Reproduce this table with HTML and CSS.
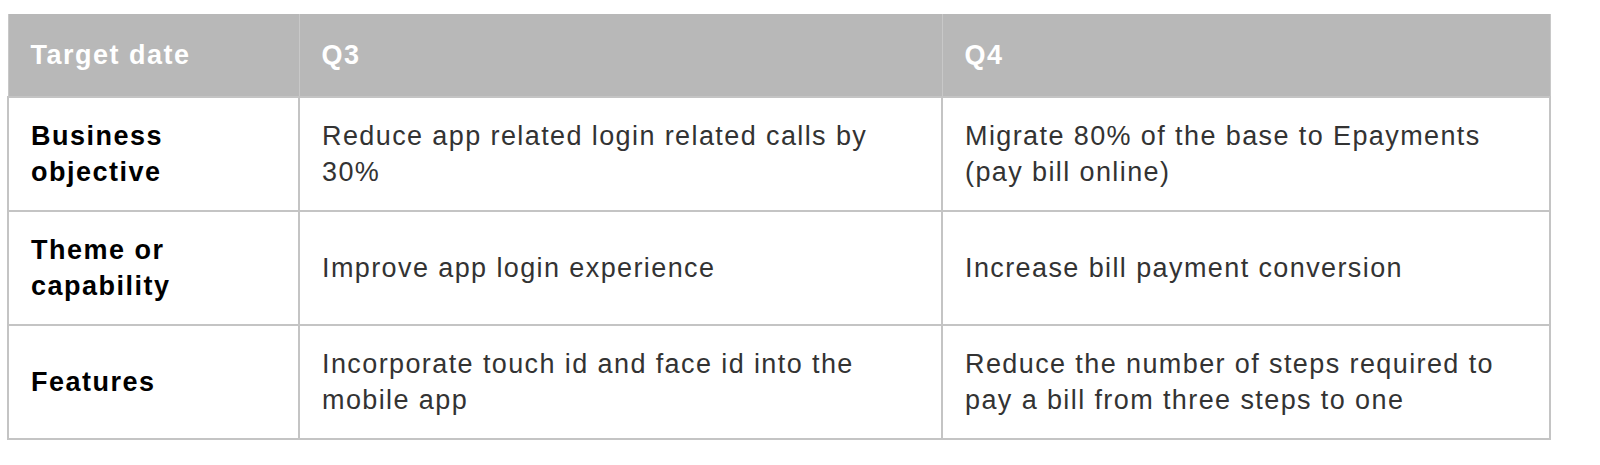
FILE: index.html
```html
<!DOCTYPE html>
<html>
<head>
<meta charset="utf-8">
<link rel="stylesheet" href="styles.css">
</head>
<body>
<table class="roadmap">
  <colgroup>
    <col class="c1"><col class="c2"><col class="c3">
  </colgroup>
  <thead>
    <tr><th>Target date</th><th>Q3</th><th>Q4</th></tr>
  </thead>
  <tbody>
    <tr>
      <td class="label">Business<br>objective</td>
      <td>Reduce app related login related calls by<br>30%</td>
      <td>Migrate 80% of the base to Epayments<br>(pay bill online)</td>
    </tr>
    <tr>
      <td class="label">Theme or<br>capability</td>
      <td>Improve app login experience</td>
      <td>Increase bill payment conversion</td>
    </tr>
    <tr>
      <td class="label">Features</td>
      <td>Incorporate touch id and face id into the<br>mobile app</td>
      <td>Reduce the number of steps required to<br>pay a bill from three steps to one</td>
    </tr>
  </tbody>
</table>
</body>
</html>
```
FILE: styles.css
```css
html, body {
  margin: 0;
  padding: 0;
  background: #ffffff;
}
body {
  padding: 14px 0 0 7px;
  font-family: "Liberation Sans", Arial, Helvetica, sans-serif;
}
.roadmap {
  border-collapse: collapse;
  width: 1542px;
  table-layout: fixed;
}
.c1 { width: 291px; }
.c2 { width: 643px; }
.c3 { width: 608px; }
.roadmap th {
  background: #b8b8b8;
  color: #ffffff;
  font-weight: bold;
  font-size: 27px;
  letter-spacing: 1.5px;
  text-align: left;
  height: 83px;
  padding: 0 22px;
  border: 1px solid #c8c8c8;
  border-top: 0;
  box-sizing: border-box;
}
.roadmap td {
  border: 2px solid #c4c4c4;
  font-size: 27px;
  letter-spacing: 1.4px;
  line-height: 36px;
  color: #333333;
  padding: 0 22px;
  height: 114px;
  vertical-align: middle;
  box-sizing: border-box;
}
.roadmap td.label {
  color: #000000;
  font-weight: bold;
  letter-spacing: 1.5px;
}
```
